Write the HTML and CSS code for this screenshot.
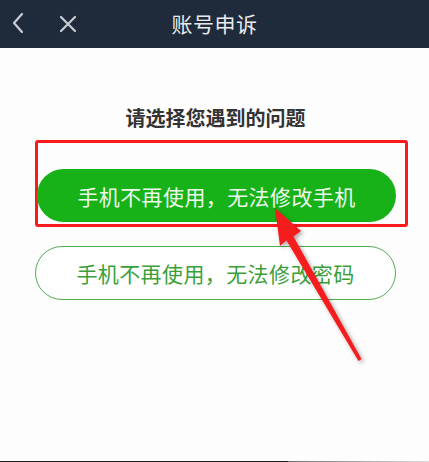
FILE: index.html
```html
<!DOCTYPE html>
<html lang="zh-CN">
<head>
<meta charset="utf-8">
<title>账号申诉</title>
<link rel="stylesheet" href="styles.css">
</head>
<body>
<div class="page">
  <header class="topbar">
    <div class="nav-left">
      <svg class="icon-back" width="14" height="22" viewBox="0 0 14 22"><path d="M11 2 L3 11 L11 20" fill="none" stroke="#c9cdd3" stroke-width="2.2" stroke-linecap="round" stroke-linejoin="round"/></svg>
      <svg class="icon-close" width="18" height="18" viewBox="0 0 18 18"><path d="M2 2 L16 16 M16 2 L2 16" fill="none" stroke="#c9cdd3" stroke-width="2.2" stroke-linecap="round"/></svg>
    </div>
    <div class="title">账号申诉</div>
  </header>
  <main class="content">
    <div class="subtitle">请选择您遇到的问题</div>
    <div class="options">
      <div class="highlight">
        <div class="btn btn-primary">手机不再使用，无法修改手机</div>
      </div>
      <div class="btn btn-outline">手机不再使用，无法修改密码</div>
    </div>
  </main>
  <div class="bottom-line"></div>
  <svg class="arrow" width="429" height="462" viewBox="0 0 429 462">
    <defs>
      <filter id="sh" x="-50%" y="-50%" width="200%" height="200%">
        <feDropShadow dx="2" dy="2" stdDeviation="2" flood-color="#000" flood-opacity="0.35"/>
      </filter>
    </defs>
    <polygon filter="url(#sh)" fill="#f41c1c" points="275,208 301,231 293.5,236.5 361.5,359 358.5,361 286.5,240.5 280,246"/>
  </svg>
</div>
</body>
</html>
```
FILE: styles.css
```css
* { box-sizing: border-box; }
html, body { margin: 0; padding: 0; background: #fdfdfd; }
body {
  font-family: "Noto Sans CJK SC", "Noto Sans", sans-serif;
  width: 429px;
  height: 462px;
  overflow: hidden;
}
.page {
  position: relative;
  width: 429px;
  height: 462px;
  display: flex;
  flex-direction: column;
}
.topbar {
  height: 48px;
  background: #1f2b3b;
  position: relative;
  display: flex;
  align-items: center;
  justify-content: center;
  flex-shrink: 0;
}
.nav-left {
  position: absolute;
  left: 11px;
  top: 12px;
  display: flex;
  align-items: center;
  gap: 34px;
}
.icon-close { margin-top: 1px; }
.title {
  color: #e9eaec;
  font-size: 21px;
  line-height: 28px;
  margin-top: -2px;
  letter-spacing: 0.5px;
}
.content {
  flex: 1;
  padding-top: 57px;
  display: flex;
  flex-direction: column;
  align-items: center;
}
.subtitle {
  font-size: 20px;
  line-height: 26px;
  font-weight: 700;
  color: #333333;
  margin-left: 2px;
}
.options {
  align-self: flex-start;
  margin-left: 35px;
  margin-top: 9px;
  display: flex;
  flex-direction: column;
  gap: 19px;
}
.highlight {
  width: 373px;
  height: 87px;
  border: 3px solid #fa1c1c;
  border-radius: 3px;
  padding-top: 26px;
}
.btn {
  border-radius: 30px;
  display: flex;
  align-items: center;
  justify-content: center;
  font-size: 21px;
  letter-spacing: 0.4px;
}
.btn-primary {
  width: 359px;
  height: 53px;
  margin-left: -1px;
  background: #17b217;
  color: #eef8ee;
}
.btn-outline {
  width: 361px;
  height: 54px;
  border: 1.5px solid #4fae4f;
  color: #3a9f3a;
  background: #ffffff;
}
.bottom-line {
  position: absolute;
  left: 0;
  bottom: 0;
  width: 429px;
  height: 1px;
  background: linear-gradient(to right, #1a1a1a 0, #1a1a1a 288px, #6e6e6e 288px, #9a9a9a 340px, #dddddd 429px);
}
.arrow {
  position: absolute;
  left: 0;
  top: 0;
  pointer-events: none;
}
```
